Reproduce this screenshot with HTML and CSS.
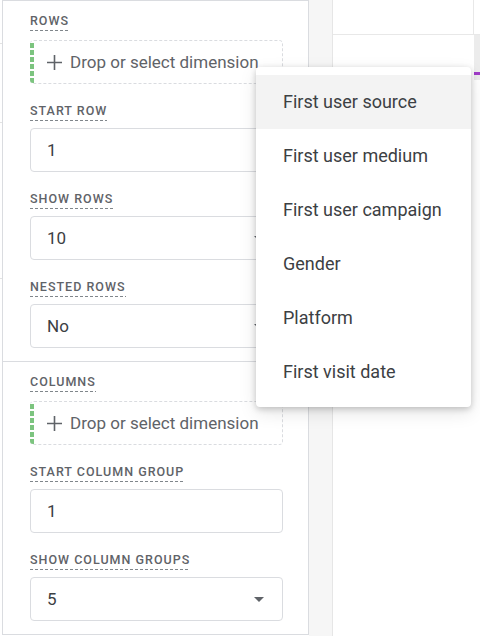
FILE: index.html
```html
<!DOCTYPE html>
<html lang="en">

<head>
  <meta charset="UTF-8" />
  <title>Table settings</title>
  <link rel="stylesheet" href="styles.css">
</head>

<body>
  <div class="page">
    <div class="gutter"></div>

    <aside class="panel">
      <section class="group">
        <div class="label first"><span>Rows</span></div>
        <div class="drop">
          <span class="drop-bar"></span>
          <svg class="plus" width="15" height="15" viewBox="0 0 15 15">
            <path d="M7.5 0v15M0 7.5h15" stroke="#5f6368" stroke-width="1.6" fill="none" />
          </svg>
          <span class="drop-text">Drop or select dimension</span>
        </div>

        <div class="field">
          <div class="label"><span>Start row</span></div>
          <div class="input">1</div>
        </div>

        <div class="field">
          <div class="label"><span>Show rows</span></div>
          <div class="input select">10 <svg class="caret" width="10" height="5" viewBox="0 0 10 5"><path d="M0 0h10L5 5z" fill="#5f6368" /></svg></div>
        </div>

        <div class="field">
          <div class="label"><span>Nested rows</span></div>
          <div class="input select">No <svg class="caret" width="10" height="5" viewBox="0 0 10 5"><path d="M0 0h10L5 5z" fill="#5f6368" /></svg></div>
        </div>
      </section>

      <section class="group">
        <div class="label first"><span>Columns</span></div>
        <div class="drop">
          <span class="drop-bar"></span>
          <svg class="plus" width="15" height="15" viewBox="0 0 15 15">
            <path d="M7.5 0v15M0 7.5h15" stroke="#5f6368" stroke-width="1.6" fill="none" />
          </svg>
          <span class="drop-text">Drop or select dimension</span>
        </div>

        <div class="field">
          <div class="label"><span>Start column group</span></div>
          <div class="input">1</div>
        </div>

        <div class="field">
          <div class="label"><span>Show column groups</span></div>
          <div class="input select">5 <svg class="caret" width="10" height="5" viewBox="0 0 10 5"><path d="M0 0h10L5 5z" fill="#5f6368" /></svg></div>
        </div>
      </section>
    </aside>

    <div class="strip"></div>

    <div class="canvas">
      <div class="canvas-head">
        <div class="head-cell"></div>
      </div>
      <div class="canvas-body">
        <div class="body-cell"></div>
        <div class="tab-edge"></div>
      </div>
    </div>

    <ul class="menu">
      <li class="active">First user source</li>
      <li>First user medium</li>
      <li>First user campaign</li>
      <li>Gender</li>
      <li>Platform</li>
      <li>First visit date</li>
    </ul>
  </div>
</body>

</html>
```

FILE: styles.css
```css
* {
  margin: 0;
  padding: 0;
  box-sizing: border-box;
}

body {
  font-family: Roboto, 'Liberation Sans', sans-serif;
  background: #fff;
  color: #3c4043;
}

.page {
  position: relative;
  display: flex;
  width: 480px;
  height: 636px;
  overflow: hidden;
}

/* bits of the editor behind the panel */
.gutter {
  width: 2px;
  flex: none;
  background:
    linear-gradient(#e3e3e3, #e3e3e3) 0 43px / 100% 1px no-repeat,
    linear-gradient(#e3e3e3, #e3e3e3) 0 122px / 100% 1px no-repeat,
    linear-gradient(#e3e3e3, #e3e3e3) 0 278px / 100% 1px no-repeat;
}

.panel {
  width: 307px;
  height: 635px;
  flex: none;
  background: #fff;
  border: 1px solid #dadce0;
}

.group {
  padding: 12px 25px 13px 27px;
}

.group + .group {
  border-top: 1px solid #dadce0;
}

.label {
  display: flex;
  margin-bottom: 7px;
}

.label.first {
  margin-bottom: 9px;
}

.label span {
  display: block;
  font-size: 12.5px;
  font-weight: 500;
  line-height: 16px;
  letter-spacing: 1px;
  text-transform: uppercase;
  color: #5f6368;
  padding-bottom: 2px;
  background: repeating-linear-gradient(to right, #80868b 0 3px, transparent 3px 5px) left bottom / 100% 1px no-repeat;
}

.drop {
  display: flex;
  align-items: center;
  height: 44px;
  border: 1px dashed #dadce0;
  border-left: none;
  border-radius: 4px;
}

.drop-bar {
  align-self: stretch;
  width: 4px;
  margin: 2px 0 0;
  border-radius: 0 0 0 3px;
  background: repeating-linear-gradient(to bottom, #7cc47f 0 5px, transparent 5px 7px);
}

.plus {
  margin-left: 13px;
  margin-right: 8px;
}

.drop-text {
  font-size: 17px;
  color: #5f6368;
}

.field {
  margin-top: 19px;
}

.input {
  display: flex;
  align-items: center;
  justify-content: space-between;
  height: 44px;
  padding: 0 18px 0 16px;
  border: 1px solid #dadce0;
  border-radius: 4px;
  font-size: 17px;
  color: #3c4043;
}

.strip {
  width: 24px;
  flex: none;
  background: #f6f6f6;
  border-right: 1px solid #e6e6e6;
}

.canvas {
  flex: 1;
  display: flex;
  flex-direction: column;
}

.canvas-head {
  display: flex;
  height: 35px;
  border-bottom: 1px solid #e8e8e8;
}

.head-cell {
  width: 141px;
  border-right: 1px solid #e8e8e8;
}

.canvas-body {
  display: flex;
  flex: 1;
}

.body-cell {
  width: 141px;
}

.tab-edge {
  flex: 1;
  height: 45px;
  background:
    linear-gradient(#a03cc8, #a03cc8) 0 37px / 100% 3px no-repeat,
    #ececec;
}

/* dimension picker */
.menu {
  position: absolute;
  left: 256px;
  top: 67px;
  width: 215px;
  padding: 8px 0;
  list-style: none;
  background: #fff;
  border-radius: 4px;
  box-shadow: 0 2px 6px rgba(0, 0, 0, 0.2), 0 6px 18px rgba(0, 0, 0, 0.1);
}

.menu li {
  height: 54px;
  line-height: 54px;
  padding-left: 27px;
  font-size: 18px;
  color: #3c4043;
}

.menu li.active {
  background: #f3f3f3;
}
```
